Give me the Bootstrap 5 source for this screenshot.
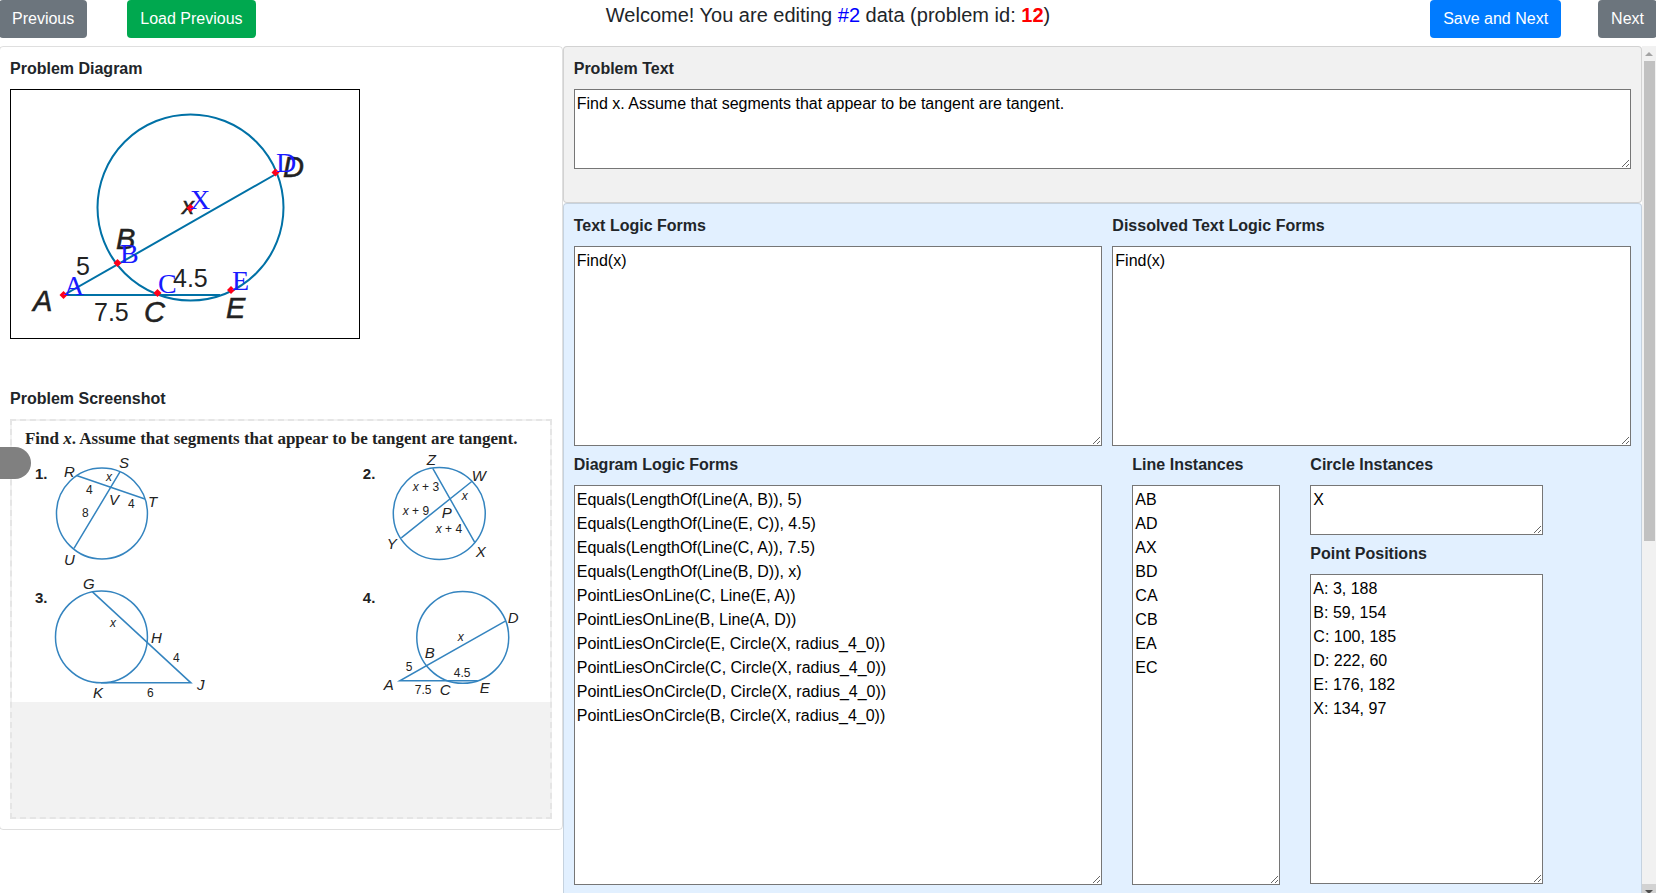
<!DOCTYPE html>
<html lang="en">
<head>
<meta charset="utf-8">
<meta name="viewport" content="width=device-width, initial-scale=1">
<title>Problem Editor</title>
<link href="https://cdn.jsdelivr.net/npm/bootstrap@5.3.0/dist/css/bootstrap.min.css" rel="stylesheet">
<style>
  body { font-family: "Liberation Sans", Arial, sans-serif; color: #212529; overflow: hidden; }
  .page { margin: 0 -1px; }
  .topbar { display: grid; grid-template-columns: 1fr auto 1fr; height: 46px; align-items: start; }
  .topbar .btn, .topbar .btn:hover { border-radius: 4px; color: #fff; }
  .btn-plain, .btn-plain:hover { background: #6c757d; }
  .btn-load, .btn-load:hover { background: #00a84f; }
  .btn-save, .btn-save:hover { background: #007bff; }
  .gap-wide { gap: 40px; }
  .gap-near { gap: 37px; }
  .headline { font-size: 20px; line-height: 30px; }
  .num { color: #00f; }
  .pid { color: #f00; }

  .side { width: 34%; }
  .forms-area { width: 66%; height: calc(100vh - 40px); }
  .forms { flex: 1; min-width: 0; overflow-y: auto; scrollbar-width: none; }
  .rail { width: 15px; background: #f1f1f1; }
  .rail-end { height: 15px; }
  .rail-end svg { width: 8px; height: 4px; }
  .rail-down { background: #d2d2d2; }
  .rail-thumb { width: 11px; height: 480px; margin: 0 2px; background: #c1c1c1; }

  .panel { border: 1px solid rgba(0,0,0,.125); border-radius: 4px; padding: 10px; }
  .panel-text { background: #f1f1f1; padding-bottom: 26px; }
  .panel-logic { background: #e2f0ff; min-height: 146vh; }
  .panel label, .panel h2 { display: block; font-size: 16px; line-height: 24px; font-weight: 700; margin: 0 0 8px; }
  .panel textarea { display: block; width: 100%; margin-bottom: 7px; padding: 2px; border: 1px solid #767676; background: #fff; color: #000; resize: both; line-height: 24px; }
  .h-line { height: 50px; } .h-text { height: 80px; } .h-logic { height: 200px; } .h-points { height: 310px; } .h-tall { height: 400px; }
  .gap-col { gap: 10px; }
  .gap-cols { gap: 30px; }
  .col-half { width: 50%; }
  .col-lines { width: 14%; }
  .col-circles { width: 22%; }

  .diagram { width: 350px; max-width: 100%; border: 1px solid #000; margin-bottom: 48px; }
  .shot { min-height: 400px; border: 2px dashed #e5e5e5; background: #f2f2f2; }
  .diagram svg, .shot svg { display: block; width: 100%; background: #fff; }
  svg text { fill: #222; }
  .geo { fill: none; stroke: #0071a6; stroke-width: 2; }
  .geo-s { fill: none; stroke: #3484bf; stroke-width: 1.5; }
  .it { font-style: italic; }
  .mk text { font-family: "Liberation Serif", serif; fill: #1a1aff; }
  .drawer-tab { position: fixed; left: 0; top: 50vh; width: 31px; height: 32px; border: 0; padding: 0; background: #808080; border-radius: 0 16px 16px 0; }
</style>
</head>
<body>
<div class="page">
  <header class="topbar">
    <div class="d-flex gap-wide">
      <button class="btn btn-plain" type="button">Previous</button>
      <button class="btn btn-load" type="button">Load Previous</button>
    </div>
    <div class="headline">Welcome! You are editing <span class="num">#2</span> data (problem id: <b class="pid">12</b>)</div>
    <div class="d-flex justify-content-end gap-near">
      <button class="btn btn-save" type="button">Save and Next</button>
      <button class="btn btn-plain" type="button">Next</button>
    </div>
  </header>

  <main class="d-flex align-items-start">
    <section class="side panel">
      <h2>Problem Diagram</h2>
      <div class="diagram">
        <svg viewBox="11 90 348 248" role="img" aria-label="Problem diagram">
          <g class="geo">
            <circle cx="190.500" cy="207.500" r="93"/>
            <path d="M276 174L64 295H220"/>
          </g>
          <g class="it" font-size="29" stroke="#222" stroke-width=".5">
            <text x="283" y="177">D</text><text x="116" y="249">B</text><text x="33" y="311">A</text>
            <text x="144" y="322">C</text><text x="226" y="318">E</text>
            <text x="182" y="214" font-size="24">x</text>
          </g>
          <g font-size="25">
            <text x="76" y="275">5</text><text x="173" y="287">4.5</text><text x="94" y="321">7.5</text>
          </g>
          <path fill="#ff0019" d="M63.500 291l4 4-4 4-4-4zM117.500 259l4 4-4 4-4-4zM157.500 289l4 4-4 4-4-4zM231 286l4 4-4 4-4-4zM275.500 168.500l4 4-4 4-4-4zM190.500 204l4 4-4 4-4-4z"/>
          <g class="mk" font-size="28">
            <text x="276" y="172">D</text><text x="190" y="209">X</text><text x="120" y="263">B</text>
            <text x="64" y="295">A</text><text x="158" y="293">C</text><text x="232" y="290">E</text>
          </g>
        </svg>
      </div>
      <h2>Problem Screenshot</h2>
      <div class="shot">
        <svg viewBox="12 421 538 281" role="img" aria-label="Problem screenshot">
          <text x="25" y="444" font-size="17" font-weight="700" font-family="Liberation Serif, serif">Find <tspan class="it">x</tspan>. Assume that segments that appear to be tangent are tangent.</text>
          <g class="geo-s">
            <circle cx="102" cy="513.500" r="45.500"/><path d="M76.500 475.500L145 499M120 472L74 548.500"/>
            <circle cx="439.500" cy="513.500" r="46"/><path d="M433 468.500L475 542.500M472 481.500L401.500 538"/>
            <circle cx="101.500" cy="637" r="46"/><path d="M92.500 592L191 683H101"/>
            <circle cx="463" cy="637.500" r="46"/><path d="M506 621L400 681H478"/>
          </g>
          <g font-size="15" font-weight="700">
            <text x="35" y="479">1.</text><text x="363" y="479">2.</text><text x="35" y="603">3.</text><text x="363" y="603">4.</text>
          </g>
          <g class="it" font-size="15">
            <text x="64" y="477">R</text><text x="119" y="468">S</text><text x="109" y="505">V</text><text x="148" y="507">T</text><text x="64" y="565">U</text>
            <text x="427" y="465">Z</text><text x="472" y="481">W</text><text x="442" y="518">P</text><text x="387" y="549">Y</text><text x="476" y="557">X</text>
            <text x="83" y="589">G</text><text x="151" y="643">H</text><text x="197" y="690">J</text><text x="93" y="698">K</text>
            <text x="508" y="623">D</text><text x="425" y="658">B</text><text x="384" y="690">A</text><text x="440" y="695">C</text><text x="480" y="693">E</text>
          </g>
          <g font-size="12">
            <text class="it" x="106" y="481">x</text><text x="86" y="494">4</text><text x="128" y="508">4</text><text x="82" y="517">8</text>
            <text x="413" y="491"><tspan class="it">x</tspan> + 3</text><text class="it" x="462" y="500">x</text>
            <text x="403" y="515"><tspan class="it">x</tspan> + 9</text><text x="436" y="533"><tspan class="it">x</tspan> + 4</text>
            <text class="it" x="110" y="627">x</text><text x="173" y="662">4</text><text x="147" y="697">6</text>
            <text class="it" x="458" y="641">x</text><text x="406" y="671">5</text><text x="415" y="694">7.5</text><text x="454" y="677">4.5</text>
          </g>
        </svg>
      </div>
    </section>

    <section class="forms-area d-flex">
      <div class="forms">
        <div class="panel panel-text">
          <label for="ptext">Problem Text</label>
          <textarea id="ptext" class="h-text" spellcheck="false">Find x. Assume that segments that appear to be tangent are tangent.</textarea>
        </div>
        <div class="panel panel-logic">
          <div class="d-flex gap-col">
            <div class="col-half">
              <label for="tlf">Text Logic Forms</label>
              <textarea id="tlf" class="h-logic" spellcheck="false">Find(x)</textarea>
            </div>
            <div class="flex-fill">
              <label for="dtlf">Dissolved Text Logic Forms</label>
              <textarea id="dtlf" class="h-logic" spellcheck="false">Find(x)</textarea>
            </div>
          </div>
          <div class="d-flex gap-cols">
            <div class="col-half">
              <label for="dlf">Diagram Logic Forms</label>
              <textarea id="dlf" class="h-tall" spellcheck="false">Equals(LengthOf(Line(A, B)), 5)
Equals(LengthOf(Line(E, C)), 4.5)
Equals(LengthOf(Line(C, A)), 7.5)
Equals(LengthOf(Line(B, D)), x)
PointLiesOnLine(C, Line(E, A))
PointLiesOnLine(B, Line(A, D))
PointLiesOnCircle(E, Circle(X, radius_4_0))
PointLiesOnCircle(C, Circle(X, radius_4_0))
PointLiesOnCircle(D, Circle(X, radius_4_0))
PointLiesOnCircle(B, Circle(X, radius_4_0))</textarea>
            </div>
            <div class="col-lines">
              <label for="lines">Line Instances</label>
              <textarea id="lines" class="h-tall" spellcheck="false">AB
AD
AX
BD
CA
CB
EA
EC</textarea>
            </div>
            <div class="col-circles">
              <label for="circles">Circle Instances</label>
              <textarea id="circles" class="h-line" spellcheck="false">X</textarea>
              <label for="points">Point Positions</label>
              <textarea id="points" class="h-points" spellcheck="false">A: 3, 188
B: 59, 154
C: 100, 185
D: 222, 60
E: 176, 182
X: 134, 97</textarea>
            </div>
          </div>
        </div>
      </div>
      <div class="rail d-flex flex-column" aria-hidden="true">
        <div class="rail-end d-flex align-items-center justify-content-center"><svg viewBox="0 0 8 4"><path d="M0 4L4 0L8 4z" fill="#a3a3a3"/></svg></div>
        <div class="rail-thumb"></div>
        <div class="rail-end rail-down mt-auto d-flex align-items-center justify-content-center"><svg viewBox="0 0 8 4"><path d="M0 0L4 4L8 0z" fill="#505050"/></svg></div>
      </div>
    </section>
  </main>
</div>
<button class="drawer-tab" type="button" aria-label="Open drawer"></button>
<script src="https://cdn.jsdelivr.net/npm/bootstrap@5.3.0/dist/js/bootstrap.bundle.min.js"></script>
</body>
</html>
